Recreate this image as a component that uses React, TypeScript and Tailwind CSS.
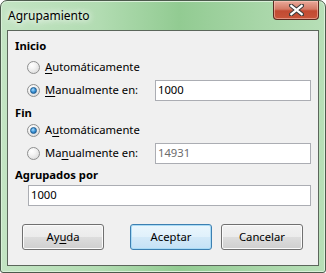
import React from "react";

const font = { fontFamily: '"Noto Sans", "Liberation Sans", sans-serif' };

function Radio({ checked }: { checked?: boolean }) {
  return (
    <span className="relative inline-flex h-[13px] w-[13px] shrink-0 items-center justify-center rounded-full border border-[#8e8f8f] bg-[radial-gradient(circle_at_35%_30%,#ffffff_0%,#f4f4f4_35%,#d4d4d4_100%)]">
      {checked && (
        <span className="h-[7px] w-[7px] rounded-full border border-[#1f5c8f] bg-[radial-gradient(circle_at_40%_35%,#a8dcff_0%,#3a93d6_50%,#1b5a9c_100%)]" />
      )}
    </span>
  );
}

function U({ children }: { children: React.ReactNode }) {
  return <span className="underline decoration-1 underline-offset-2">{children}</span>;
}

function Btn({ children, def }: { children: React.ReactNode; def?: boolean }) {
  return (
    <div
      className={
        "flex h-[26px] w-[82px] items-center justify-center rounded-[3px] border text-[#000] " +
        (def
          ? "border-[#3c7fb1] bg-[linear-gradient(#eaf6fd_0%,#e0f0fb_50%,#d3e9f8_50%,#c4e1f6_100%)] shadow-[inset_0_0_0_1px_#a9dbf6]"
          : "border-[#707070] bg-[linear-gradient(#f2f2f2_0%,#ebebeb_50%,#dddddd_50%,#cfcfcf_100%)] shadow-[inset_0_0_0_1px_#fbfbfb]")
      }
    >
      {children}
    </div>
  );
}

export default function App() {
  return (
    <div style={font} className="h-[273px] w-[326px] text-[11.25px] text-black">
      <div className="relative flex h-[273px] w-[326px] flex-col rounded-t-[7px] rounded-b-[3px] border border-[#4c5a4c] bg-[linear-gradient(90deg,#c3e4c3_0%,#b2dcb2_30%,#92cb92_55%,#a8d6a8_80%,#b7dfb7_100%)] shadow-[inset_0_0_0_1px_#d9f0d9]">
        {/* title bar */}
        <div className="flex h-[29px] shrink-0 items-start">
          <span className="ml-[7px] mt-[6px] text-[12px] [text-shadow:0_0_6px_#ffffff,0_0_10px_#ffffff]">Agrupamiento</span>
          <div className="ml-auto mr-[6px] flex h-[19px] w-[46px] items-center justify-center rounded-b-[4px] border border-t-0 border-[#5a2a20] bg-[linear-gradient(#e9a99a_0%,#d47a66_45%,#c24a32_55%,#c8553a_100%)] shadow-[inset_0_0_0_1px_rgba(255,210,200,0.5)]">
            <svg width="15" height="12" viewBox="0 0 15 12">
              <path
                d="M2 1.5 L13 10.5 M13 1.5 L2 10.5"
                stroke="#3a3a3a"
                strokeWidth="4.2"
                strokeLinecap="square"
              />
              <path
                d="M2.3 1.8 L12.7 10.2 M12.7 1.8 L2.3 10.2"
                stroke="#ffffff"
                strokeWidth="2.2"
                strokeLinecap="square"
              />
            </svg>
          </div>
        </div>
        {/* client area */}
        <div className="mx-[6px] flex h-[236px] flex-col border border-[#5b665b] bg-[#f0f0f0] pl-[7px] pr-[7px]">
          <div className="mt-[8px] flex h-[14px] items-center font-bold">Inicio</div>
          <div className="flex h-[23px] items-center pl-[12px] mt-[3px]">
            <Radio />
            <span className="ml-[5px]"><U>A</U>utomáticamente</span>
          </div>
          <div className="flex h-[23px] items-center pl-[12px]">
            <Radio checked />
            <span className="ml-[5px]"><U>M</U>anualmente en:</span>
            <div className="ml-auto flex h-[21px] w-[156px] items-center border border-[#abadb3] bg-white px-[2px]">1000</div>
          </div>
          <div className="mt-[3px] flex h-[16px] items-center font-bold">Fin</div>
          <div className="flex h-[18px] items-center pl-[12px]">
            <Radio checked />
            <span className="ml-[5px]">A<U>u</U>tomáticamente</span>
          </div>
          <div className="mt-[3px] flex h-[23px] items-center pl-[12px]">
            <Radio />
            <span className="ml-[5px]">Ma<U>n</U>ualmente en:</span>
            <div className="ml-auto flex h-[21px] w-[156px] items-center border border-[#abadb3] bg-white px-[2px] text-[#6d6d6d]">14931</div>
          </div>
          <div className="mt-[2px] flex h-[16px] items-center font-bold">Agrupados por</div>
          <div className="ml-[13px] mt-[2px] flex h-[21px] items-center border border-[#abadb3] bg-white px-[2px]">1000</div>
          <div className="mt-[18px] flex items-center pl-[7px]">
            <Btn>Ay<U>u</U>da</Btn>
            <div className="ml-[26px]"><Btn def>Aceptar</Btn></div>
            <div className="ml-[9px]"><Btn>Cancelar</Btn></div>
          </div>
        </div>
      </div>
    </div>
  );
}
